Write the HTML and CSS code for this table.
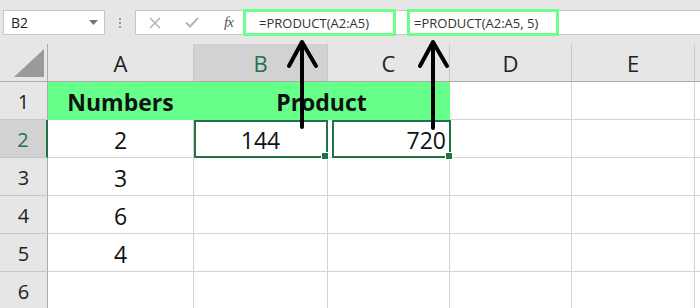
FILE: index.html
```html
<!DOCTYPE html>
<html lang="en">
	<head>
		<meta charset="UTF-8" />
		<title>PRODUCT function</title>
		<link rel="stylesheet" href="styles.css">
	</head>
	<body>
		<div class="app">
			<!-- name box + formula bar -->
			<header class="toolbar">
				<div class="namebox">
					<span>B2</span>
					<svg class="caret" width="9" height="5" viewBox="0 0 9 5"><path d="M0 0h9L4.5 5z" fill="#777"/></svg>
				</div>
				<div class="grip">
					<i></i><i></i><i></i>
				</div>
				<div class="formula">
					<span class="fbtn">
						<svg width="12" height="12" viewBox="0 0 12 12"><path d="M1 1l10 10M11 1L1 11" stroke="#b4b4b4" stroke-width="1.6"/></svg>
					</span>
					<span class="fbtn">
						<svg width="14" height="11" viewBox="0 0 14 11"><path d="M1 5.5l4 4L13 1" stroke="#b4b4b4" stroke-width="2" fill="none"/></svg>
					</span>
					<span class="fbtn fx">fx</span>
					<span class="formula-text first">=PRODUCT(A2:A5)</span>
					<span class="formula-text second">=PRODUCT(A2:A5, 5)</span>
				</div>
			</header>

			<section class="sheet">
				<div class="corner"><span></span></div>
				<div class="colhead">A</div>
				<div class="colhead active">B</div>
				<div class="colhead">C</div>
				<div class="colhead">D</div>
				<div class="colhead">E</div>
				<div class="colhead"></div>

				<div class="rowhead">1</div>
				<div class="cell title">Numbers</div>
				<div class="cell title merged">Product</div>
				<div class="cell"></div>
				<div class="cell"></div>
				<div class="cell"></div>

				<div class="rowhead active">2</div>
				<div class="cell center">2</div>
				<div class="cell center selected">144</div>
				<div class="cell right boxed">720</div>
				<div class="cell"></div>
				<div class="cell"></div>
				<div class="cell"></div>

				<div class="rowhead">3</div>
				<div class="cell center">3</div>
				<div class="cell"></div>
				<div class="cell"></div>
				<div class="cell"></div>
				<div class="cell"></div>
				<div class="cell"></div>

				<div class="rowhead">4</div>
				<div class="cell center">6</div>
				<div class="cell"></div>
				<div class="cell"></div>
				<div class="cell"></div>
				<div class="cell"></div>
				<div class="cell"></div>

				<div class="rowhead">5</div>
				<div class="cell center">4</div>
				<div class="cell"></div>
				<div class="cell"></div>
				<div class="cell"></div>
				<div class="cell"></div>
				<div class="cell"></div>

				<div class="rowhead">6</div>
				<div class="cell"></div>
				<div class="cell"></div>
				<div class="cell"></div>
				<div class="cell"></div>
				<div class="cell"></div>
				<div class="cell"></div>
			</section>

			<!-- arrows pointing from the results up to their formulas -->
			<svg class="arrows" width="700" height="308" viewBox="0 0 700 308">
				<g stroke="#000" stroke-width="4" fill="none" stroke-linecap="round" stroke-linejoin="round">
					<path d="M302 127V43M289 66l13-24 14 24"/>
					<path d="M433 128V43M420 66l13-24 14 24"/>
				</g>
			</svg>
		</div>
	</body>
</html>
```

FILE: styles.css
```css
* { margin: 0; padding: 0; box-sizing: border-box; }
body {
	font-family: "Open Sans", "Noto Sans", sans-serif;
	background: #fff;
	color: #111;
}
.app {
	position: relative;
	width: 700px;
	height: 308px;
	overflow: hidden;
}

/* top bar */
.toolbar {
	height: 44px;
	background: #e6e6e6;
	display: flex;
	align-items: flex-start;
	padding: 10px 0 0 3px;
}
.namebox {
	width: 102px;
	height: 25px;
	background: #fff;
	border: 1px solid #c6c6c6;
	display: flex;
	align-items: center;
	justify-content: space-between;
	padding: 0 6px 0 7px;
	font-size: 14px;
	color: #222;
}
.grip {
	width: 30px;
	height: 25px;
	display: flex;
	flex-direction: column;
	align-items: center;
	justify-content: center;
	gap: 2px;
}
.grip i {
	width: 2px;
	height: 2px;
	background: #9a9a9a;
}
.formula {
	flex: 1;
	height: 25px;
	background: #fff;
	border: 1px solid #c6c6c6;
	border-right: none;
	display: flex;
	align-items: center;
}
.fbtn {
	width: 37px;
	display: flex;
	justify-content: center;
	align-items: center;
}
.fx {
	font-family: "Liberation Serif", serif;
	font-style: italic;
	font-size: 15px;
	color: #555;
	letter-spacing: -1px;
}
.formula-text {
	height: 27px;
	border: 3px solid #6bff8f;
	font-size: 13px;
	color: #333;
	display: flex;
	align-items: center;
	white-space: nowrap;
}
.formula-text.first {
	width: 153px;
	margin-left: -4px;
	padding-left: 13px;
}
.formula-text.second {
	width: 152px;
	margin-left: 11px;
	padding-left: 4px;
}

/* worksheet */
.sheet {
	display: grid;
	grid-template-columns: 48px 146px 134px 122px 122px 123px 1fr;
	grid-auto-rows: 38px;
}
.corner {
	background: #e6e6e6;
	border-right: 1px solid #ababab;
	border-bottom: 1px solid #ababab;
	display: flex;
	align-items: flex-end;
	justify-content: flex-end;
	padding: 0 3px 4px 0;
}
.corner span {
	width: 30px;
	height: 28px;
	background: #9a9a9a;
	clip-path: polygon(100% 0, 100% 100%, 0 100%);
}
.colhead {
	background: #e6e6e6;
	border-right: 1px solid #c8c8c8;
	border-bottom: 1px solid #ababab;
	font-size: 22px;
	color: #222;
	display: flex;
	align-items: center;
	justify-content: center;
}
.colhead.active {
	background: #d2d2d2;
	color: #217346;
}
.rowhead {
	background: #e6e6e6;
	border-right: 1px solid #ababab;
	border-bottom: 1px solid #c8c8c8;
	font-size: 20px;
	color: #222;
	display: flex;
	align-items: center;
	justify-content: center;
	padding-top: 2px;
}
.rowhead.active {
	background: #d2d2d2;
	color: #217346;
	border-right: 2px solid #217346;
}
.cell {
	position: relative;
	border-right: 1px solid #d4d4d4;
	border-bottom: 1px solid #d4d4d4;
	font-size: 23px;
	color: #111;
	display: flex;
	align-items: center;
	padding: 3px 6px 0;
}
.center { justify-content: center; }
.right {
	justify-content: flex-end;
	padding-right: 3px;
}
.title {
	background: #66ff8a;
	border-color: #66ff8a;
	font-weight: 700;
	justify-content: center;
}
.merged { grid-column: span 2; }

/* active cell B2 */
.selected {
	outline: 2px solid #217346;
	outline-offset: -2px;
}
/* copy of the selection box around C2 */
.boxed::before {
	content: "";
	position: absolute;
	top: 0;
	bottom: -1px;
	left: 4px;
	right: -2px;
	border: 2px solid #217346;
}
.selected::after,
.boxed::after {
	content: "";
	position: absolute;
	width: 6px;
	height: 6px;
	background: #217346;
	border: 1px solid #fff;
	bottom: -3px;
	right: -2px;
	z-index: 1;
}
.boxed::after { right: -4px; }

.arrows {
	position: absolute;
	top: 0;
	left: 0;
	pointer-events: none;
}
```
